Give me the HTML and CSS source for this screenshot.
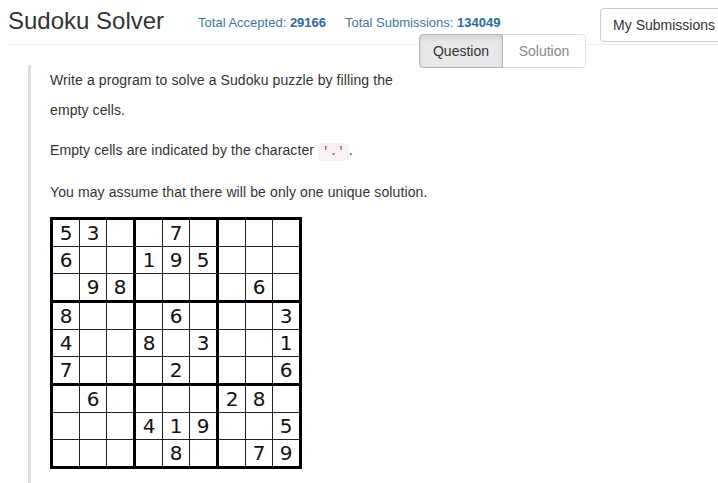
FILE: index.html
```html
<!DOCTYPE html>
<html>
<head>
<meta charset="utf-8">
<link rel="stylesheet" href="styles.css">
</head>
<body>
<div class="page">
  <header class="header">
    <h1 class="title">Sudoku Solver</h1>
    <div class="stats">
      <span class="stat">Total Accepted: <b>29166</b></span>
      <span class="stat">Total Submissions: <b>134049</b></span>
    </div>
    <button class="btn subs">My Submissions</button>
    <div class="tabs">
      <button class="tab active">Question</button>
      <button class="tab">Solution</button>
    </div>
  </header>
  <main class="question">
    <p>Write a program to solve a Sudoku puzzle by filling the<br>empty cells.</p>
    <p>Empty cells are indicated by the character <code>'.'</code>.</p>
    <p>You may assume that there will be only one unique solution.</p>
    <div class="sudoku">
      <div class="box"><span>5</span><span>3</span><span></span><span>6</span><span></span><span></span><span></span><span>9</span><span>8</span></div>
      <div class="box"><span></span><span>7</span><span></span><span>1</span><span>9</span><span>5</span><span></span><span></span><span></span></div>
      <div class="box"><span></span><span></span><span></span><span></span><span></span><span></span><span></span><span>6</span><span></span></div>
      <div class="box"><span>8</span><span></span><span></span><span>4</span><span></span><span></span><span>7</span><span></span><span></span></div>
      <div class="box"><span></span><span>6</span><span></span><span>8</span><span></span><span>3</span><span></span><span>2</span><span></span></div>
      <div class="box"><span></span><span></span><span>3</span><span></span><span></span><span>1</span><span></span><span></span><span>6</span></div>
      <div class="box"><span></span><span>6</span><span></span><span></span><span></span><span></span><span></span><span></span><span></span></div>
      <div class="box"><span></span><span></span><span></span><span>4</span><span>1</span><span>9</span><span></span><span>8</span><span></span></div>
      <div class="box"><span>2</span><span>8</span><span></span><span></span><span></span><span>5</span><span></span><span>7</span><span>9</span></div>
    </div>
  </main>
</div>
</body>
</html>
```
FILE: styles.css
```css
html, body {
  margin: 0;
  padding: 0;
  background: #fff;
  overflow: hidden;
}
body {
  font-family: "Liberation Sans", Arial, sans-serif;
  font-size: 14px;
  color: #333;
}
.page {
  width: 718px;
  height: 483px;
  position: relative;
  overflow: hidden;
}
.header {
  position: relative;
  display: flex;
  align-items: flex-start;
  height: 44px;
  margin-left: 8px;
  border-bottom: 1px solid #eee;
}
.title {
  margin: 7px 0 0 0;
  font-size: 24px;
  line-height: 28px;
  font-weight: normal;
  color: #333;
}
.stats {
  display: flex;
  gap: 19px;
  margin: 14px 0 0 34px;
  font-size: 13px;
  line-height: 18px;
  color: #3e77a3;
}
.stat b {
  font-weight: bold;
  color: #2f6a98;
}
.btn {
  font-family: "Liberation Sans", Arial, sans-serif;
  font-size: 14px;
  line-height: 20px;
  color: #333;
  background: #fff;
  border: 1px solid #ccc;
  border-radius: 4px;
  padding: 6px 12px;
  height: 34px;
  box-sizing: border-box;
}
.subs {
  margin: 8px -10px 0 auto;
  white-space: nowrap;
}
.tabs {
  position: absolute;
  left: 411px;
  top: 34px;
  display: flex;
}
.tab {
  font-family: "Liberation Sans", Arial, sans-serif;
  font-size: 14px;
  line-height: 20px;
  height: 34px;
  box-sizing: border-box;
  padding: 6px 0;
  text-align: center;
  background: #fff;
  color: #888;
  border: 1px solid #ddd;
  border-radius: 0 4px 4px 0;
  width: 84px;
  margin-left: -1px;
}
.tab.active {
  width: 84px;
  margin-left: 0;
  color: #333;
  background: #e8e8e8;
  border-color: #b5b5b5;
  border-radius: 4px 0 0 4px;
  box-shadow: inset 0 3px 5px rgba(0,0,0,0.1);
  position: relative;
  z-index: 1;
}
.question {
  margin: 20px 0 0 28px;
  border-left: 3px solid #ddd;
  padding: 0 0 16px 19px;
}
.question p {
  margin: 0 0 10px 0;
  line-height: 30px;
  letter-spacing: 0.1px;
}
code {
  font-family: "Liberation Mono", monospace;
  font-size: 12.6px;
  letter-spacing: 0;
  padding: 2px 4px;
  color: #c7254e;
  background: #f9f2f4;
  border-radius: 4px;
}
.sudoku {
  display: grid;
  grid-template-columns: repeat(3, 80px);
  gap: 3px;
  padding: 3px;
  background: #000;
  width: max-content;
}
.box {
  display: grid;
  grid-template-columns: repeat(3, 26px);
  grid-auto-rows: 26px;
  gap: 1px;
  background: #222;
}
.box span {
  background: #fff;
  font-family: "DejaVu Sans", sans-serif;
  font-size: 20px;
  line-height: 26px;
  text-align: center;
  color: #111;
}
```
